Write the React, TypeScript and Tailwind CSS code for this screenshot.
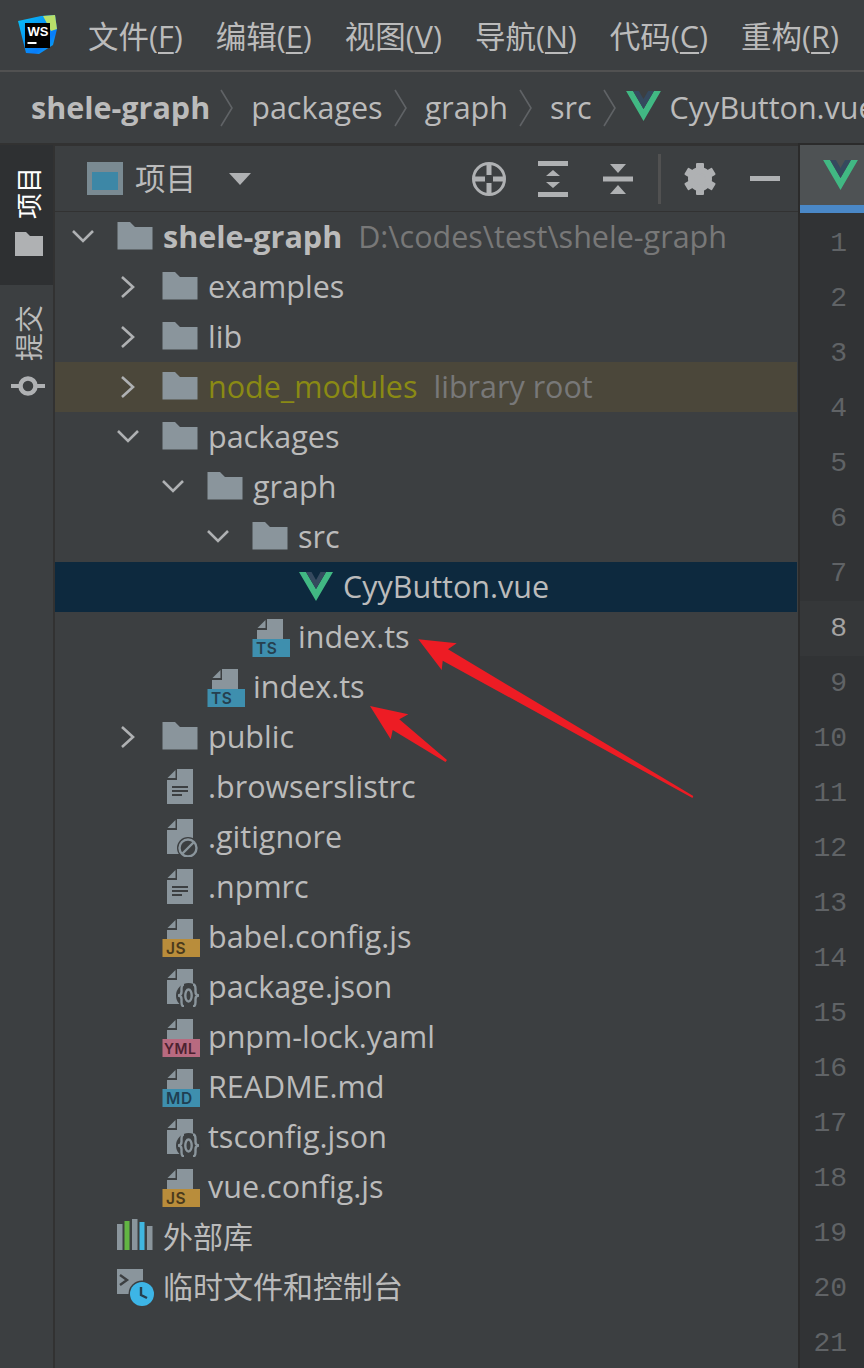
import type { ReactNode } from 'react'

const latin = 'font-["Open_Sans","Noto_Sans_CJK_SC",sans-serif]'

const PAGE = '#8a959c'
const BG = '#3c3f41'

function FilePage({ children }: { children?: ReactNode }) {
  return (
    <>
      <path d="M16 2H32V37H6V13H16Z" fill={PAGE} />
      <path d="M14.5 3V11H6.5Z" fill={PAGE} />
      {children}
    </>
  )
}

function Icon({ children }: { children: ReactNode }) {
  return (
    <svg width="40" height="40" viewBox="0 0 40 40" className="flex-none">
      {children}
    </svg>
  )
}

function Folder() {
  return (
    <Icon>
      <path d="M1.5 5H14L19 10H36.5V32.5H1.5Z" fill={PAGE} />
    </Icon>
  )
}

function TextFile() {
  return (
    <Icon>
      <FilePage>
        <path d="M11 20H27M11 24H27M11 28H21" stroke={BG} strokeWidth="2" />
      </FilePage>
    </Icon>
  )
}

function IgnoreFile() {
  return (
    <Icon>
      <FilePage>
        <circle cx="27" cy="31" r="11" fill={BG} />
        <circle cx="27" cy="31" r="8.5" fill={BG} stroke={PAGE} strokeWidth="2.4" />
        <path d="M21.5 36.5L32.5 25.5" stroke={PAGE} strokeWidth="2.4" />
      </FilePage>
    </Icon>
  )
}

function JsonFile() {
  return (
    <Icon>
      <FilePage>
        <circle cx="27.5" cy="28.5" r="12.5" fill={BG} />
        <path
          d="M23 17.5C20.5 17.5 20.5 19.5 20.5 22V25C20.5 27 19.5 28.5 17 28.5C19.5 28.5 20.5 30 20.5 32V35C20.5 37.5 20.5 39.5 23 39.5M32 17.5C34.5 17.5 34.5 19.5 34.5 22V25C34.5 27 35.5 28.5 38 28.5C35.5 28.5 34.5 30 34.5 32V35C34.5 37.5 34.5 39.5 32 39.5"
          fill="none"
          stroke={PAGE}
          strokeWidth="2.4"
        />
        <ellipse cx="27.5" cy="28.5" rx="3.2" ry="6" fill="none" stroke={PAGE} strokeWidth="2.4" />
      </FilePage>
    </Icon>
  )
}

function BadgeFile({ label, fill, ink }: { label: string; fill: string; ink: string }) {
  return (
    <Icon>
      <path d="M16 2H32V22H6V13H16Z" fill={PAGE} />
      <path d="M14.5 3V11H6.5Z" fill={PAGE} />
      <rect x="1.5" y="22" width="37.5" height="18" fill={fill} />
      <text
        x={label === 'YML' ? 3 : 5}
        y="36.5"
        fill={ink}
        fontFamily="Inter"
        fontWeight="600"
        fontSize={label === 'YML' ? 14 : 15.5}
        letterSpacing="0.6"
      >
        {label}
      </text>
    </Icon>
  )
}

function VueMark() {
  return (
    <svg width="35" height="30" viewBox="0 0 36 31" className="flex-none">
      <path d="M0 0H7.2L18 18.5L28.8 0H36L18 31Z" fill="#41b883" />
      <path d="M7.2 0H13.2L18 8.2L22.8 0H28.8L18 18.5Z" fill="#35495e" />
    </svg>
  )
}

function Chevron({ open }: { open?: boolean }) {
  return (
    <svg width="24" height="24" viewBox="0 0 24 24" className="flex-none">
      {open ? (
        <path d="M2 6L12 16L22 6" fill="none" stroke="#afb1b3" strokeWidth="2.6" />
      ) : (
        <path d="M6 2L17 12L6 22" fill="none" stroke="#afb1b3" strokeWidth="2.6" />
      )}
    </svg>
  )
}

function CrumbSep({ last }: { last?: boolean }) {
  return (
    <svg
      width="13"
      height="38"
      viewBox="0 0 13 38"
      className={last ? 'ml-[11px] mr-[10px] flex-none' : 'ml-[11px] mr-[18px] flex-none'}
    >
      <path d="M1 1L12 19L1 37" fill="none" stroke="#606366" strokeWidth="1.6" />
    </svg>
  )
}

function MenuItem({ zh, letter }: { zh: string; letter: string }) {
  return (
    <span className="whitespace-nowrap">
      {zh}(<span className="underline decoration-2 underline-offset-[4px]">{letter}</span>)
    </span>
  )
}

type RowProps = {
  indent: string
  chevron?: 'open' | 'closed'
  icon: ReactNode
  tone?: string
  children: ReactNode
}

function Row({ indent, chevron, icon, tone = '', children }: RowProps) {
  return (
    <div className={`flex h-[50px] items-center whitespace-nowrap ${indent} ${tone}`}>
      <div className="flex w-[45px] flex-none items-center">
        {chevron && <Chevron open={chevron === 'open'} />}
      </div>
      {icon}
      <div className="ml-[7px]">{children}</div>
    </div>
  )
}

const TS = <BadgeFile label="TS" fill="#3e8fae" ink="#26404f" />
const JS = <BadgeFile label="JS" fill="#b98d3b" ink="#4a3a1c" />

export default function App() {
  const lines = Array.from({ length: 21 }, (_, i) => i + 1)

  return (
    <div className={`relative flex h-[1368px] w-[864px] flex-col overflow-hidden bg-[#3c3f41] text-[30.5px] text-[#bbbbbb] ${latin}`}>
      <header className="flex h-[72px] flex-none items-center border-b-2 border-[#515151] pl-[17px]">
        <svg width="41" height="41" viewBox="0 0 41 41" className="flex-none">
          <defs>
            <linearGradient id="ws-logo" x1="0" y1="0" x2="1" y2="1">
              <stop offset="0" stopColor="#07c3f2" />
              <stop offset="0.7" stopColor="#087cfa" />
              <stop offset="1" stopColor="#07c3f2" />
            </linearGradient>
          </defs>
          <path d="M1 6L24 1L38 0L40 14L36 30L22 39L9 38Z" fill="url(#ws-logo)" />
          <path d="M26 1L38 0L40 14L34 16Z" fill="#b8e06a" />
          <rect x="8" y="8" width="25" height="25" fill="#000" />
          <text x="10.5" y="21" fill="#fff" fontFamily="Liberation Sans" fontWeight="700" fontSize="13">
            WS
          </text>
          <rect x="10.5" y="27" width="9" height="2" fill="#fff" />
        </svg>
        <nav className="ml-[30px] flex gap-[33px] pt-[3px]">
          <MenuItem zh="文件" letter="F" />
          <MenuItem zh="编辑" letter="E" />
          <MenuItem zh="视图" letter="V" />
          <MenuItem zh="导航" letter="N" />
          <MenuItem zh="代码" letter="C" />
          <MenuItem zh="重构" letter="R" />
        </nav>
      </header>

      <div className="flex h-[71px] flex-none items-center overflow-hidden whitespace-nowrap pl-[31px]">
        <span className="mr-[-1px] font-bold">shele-graph</span>
        <CrumbSep />
        <span>packages</span>
        <CrumbSep />
        <span>graph</span>
        <CrumbSep />
        <span>src</span>
        <CrumbSep last />
        <div className="mb-[3px] flex-none">
          <VueMark />
        </div>
        <span className="ml-[9px]">CyyButton.vue</span>
      </div>

      <div className="flex min-h-0 flex-1">
        <aside className="flex w-[55px] flex-none flex-col items-center border-r-2 border-t-2 border-[#323232]">
          <div className="flex h-[140px] w-full flex-col items-center bg-[#2e3032] pl-[4px] pt-[22px]">
            <span className="rotate-180 text-[26px] leading-[30px] text-white [text-orientation:sideways] [writing-mode:vertical-rl]">
              项目
            </span>
            <svg width="28" height="24" viewBox="0 0 28 24" className="mt-[13px]">
              <path d="M0 0H11L15 4H28V24H0Z" fill="#afb1b3" />
            </svg>
          </div>
          <div className="flex w-full flex-col items-center pl-[4px]">
            <span className="mt-[20px] rotate-180 text-[28px] leading-[30px] text-[#bbbbbb] [text-orientation:sideways] [writing-mode:vertical-rl]">
              提交
            </span>
            <svg width="36" height="24" viewBox="0 0 36 24" className="mt-[13px]">
              <path d="M0 12H34" stroke="#afb1b3" strokeWidth="4" />
              <circle cx="17" cy="12" r="7.5" fill={BG} stroke="#afb1b3" strokeWidth="4.5" />
            </svg>
          </div>
        </aside>

        <section className="flex w-[743px] flex-none flex-col border-t-[3px] border-[#323232]">
          <div className="flex h-[65px] flex-none items-center pl-[32px]">
            <svg width="36" height="33" viewBox="0 0 36 33" className="flex-none">
              <rect width="36" height="33" fill="#7a8a92" />
              <rect x="5" y="10" width="26" height="18" fill="#3d87a6" />
            </svg>
            <span className="ml-[12px]">项目</span>
            <svg width="22" height="12" viewBox="0 0 22 12" className="ml-[33px] flex-none">
              <path d="M0 0H22L11 12Z" fill="#afb1b3" />
            </svg>
            <div className="ml-[220px] flex items-center">
              <svg width="36" height="36" viewBox="0 0 36 36" className="flex-none">
                <circle cx="18" cy="18" r="15.5" fill="none" stroke="#afb1b3" strokeWidth="3" />
                <path d="M18 4V14M18 22V32M4 18H14M22 18H32" stroke="#afb1b3" strokeWidth="5" />
              </svg>
              <svg width="30" height="36" viewBox="0 0 30 36" className="ml-[31px] flex-none">
                <path d="M0 2.5H30M0 33.5H30" stroke="#afb1b3" strokeWidth="5" />
                <path d="M8 15L15 9L22 15ZM8 21L15 27L22 21Z" fill="#afb1b3" />
              </svg>
              <svg width="30" height="30" viewBox="0 0 30 30" className="ml-[35px] flex-none">
                <path d="M0 15H30" stroke="#afb1b3" strokeWidth="5" />
                <path d="M7 0H23L15 9ZM7 30H23L15 21Z" fill="#afb1b3" />
              </svg>
              <div className="ml-[25px] h-[50px] w-[3px] flex-none bg-[#515151]" />
              <svg width="32" height="32" viewBox="0 0 32 32" className="ml-[23px] flex-none">
                <g fill="#afb1b3">
                  <rect x="12" y="0" width="8" height="32" rx="1" />
                  <rect x="12" y="0" width="8" height="32" rx="1" transform="rotate(60 16 16)" />
                  <rect x="12" y="0" width="8" height="32" rx="1" transform="rotate(120 16 16)" />
                </g>
                <circle cx="16" cy="16" r="9" fill="none" stroke="#afb1b3" strokeWidth="6" />
              </svg>
              <div className="ml-[34px] h-[5px] w-[30px] flex-none bg-[#afb1b3]" />
            </div>
          </div>

          <div className="flex-1 border-t border-[#323232] pr-[1px]">
            <Row indent="pl-[16px]" chevron="open" icon={<Folder />}>
              <span className="font-bold">shele-graph</span>
              <span className="ml-[16px] text-[#787878]">D:\codes\test\shele-graph</span>
            </Row>
            <Row indent="pl-[61px]" chevron="closed" icon={<Folder />}>examples</Row>
            <Row indent="pl-[61px]" chevron="closed" icon={<Folder />}>lib</Row>
            <Row indent="pl-[61px]" chevron="closed" icon={<Folder />} tone="bg-[#4b473a]">
              <span className="text-[#8a8a14]">node_modules</span>
              <span className="ml-[16px] text-[#787878]">library root</span>
            </Row>
            <Row indent="pl-[61px]" chevron="open" icon={<Folder />}>packages</Row>
            <Row indent="pl-[106px]" chevron="open" icon={<Folder />}>graph</Row>
            <Row indent="pl-[151px]" chevron="open" icon={<Folder />}>src</Row>
            <Row indent="pl-[196px]" icon={<Icon><g transform="translate(3 5)"><path d="M0 0H7L17 17L27 0H34L17 29Z" fill="#41b883" /><path d="M7 0H12.5L17 8L21.5 0H27L17 17Z" fill="#35495e" /></g></Icon>} tone="bg-[#0d293e]">
              CyyButton.vue
            </Row>
            <Row indent="pl-[151px]" icon={TS}>index.ts</Row>
            <Row indent="pl-[106px]" icon={TS}>index.ts</Row>
            <Row indent="pl-[61px]" chevron="closed" icon={<Folder />}>public</Row>
            <Row indent="pl-[61px]" icon={<TextFile />}>.browserslistrc</Row>
            <Row indent="pl-[61px]" icon={<IgnoreFile />}>.gitignore</Row>
            <Row indent="pl-[61px]" icon={<TextFile />}>.npmrc</Row>
            <Row indent="pl-[61px]" icon={JS}>babel.config.js</Row>
            <Row indent="pl-[61px]" icon={<JsonFile />}>package.json</Row>
            <Row indent="pl-[61px]" icon={<BadgeFile label="YML" fill="#b86a80" ink="#4c2230" />}>pnpm-lock.yaml</Row>
            <Row indent="pl-[61px]" icon={<BadgeFile label="MD" fill="#3e8fae" ink="#1f3f52" />}>README.md</Row>
            <Row indent="pl-[61px]" icon={<JsonFile />}>tsconfig.json</Row>
            <Row indent="pl-[61px]" icon={JS}>vue.config.js</Row>
            <Row
              indent="pl-[16px]"
              icon={
                <Icon>
                  <rect x="1" y="7" width="5.5" height="26" fill={PAGE} />
                  <rect x="8.5" y="4" width="5" height="29" fill="#62b543" />
                  <rect x="16" y="2" width="5.5" height="31" fill={PAGE} />
                  <rect x="23.5" y="5" width="5" height="28" fill="#40b6e0" />
                  <rect x="31" y="9" width="5.5" height="24" fill={PAGE} />
                </Icon>
              }
            >
              <span className="text-[30px]">外部库</span>
            </Row>
            <Row
              indent="pl-[16px]"
              icon={
                <Icon>
                  <rect x="1" y="2" width="26" height="25" fill={PAGE} />
                  <path d="M4 8L11 13L4 18" fill="none" stroke={BG} strokeWidth="2.4" />
                  <circle cx="26" cy="27" r="13.5" fill={BG} />
                  <circle cx="26" cy="27" r="12" fill="#3db5e6" />
                  <path d="M25 20V28L31 31" fill="none" stroke="#26404f" strokeWidth="2.4" />
                </Icon>
              }
            >
              <span className="text-[30px]">临时文件和控制台</span>
            </Row>
          </div>
        </section>

        <section className="flex min-w-0 flex-1 flex-col border-l-2 border-t-2 border-[#2b2b2b] bg-[#313335]">
          <div className="flex h-[60px] flex-none items-center bg-[#4e5254] pl-[23px]">
            <VueMark />
          </div>
          <div className="h-[8px] flex-none bg-[#4a88c7]" />
          <div className="flex flex-col pt-[3px] font-['Liberation_Mono',monospace] text-[28px]">
            {lines.map(n => (
              <div
                key={n}
                className={
                  n === 8
                    ? 'flex h-[55px] flex-none items-center justify-end bg-[#353739] pr-[17px] text-[#a4a3a3]'
                    : 'flex h-[55px] flex-none items-center justify-end pr-[17px] text-[#606366]'
                }
              >
                {n}
              </div>
            ))}
          </div>
        </section>
      </div>

      <svg width="864" height="1368" viewBox="0 0 864 1368" className="pointer-events-none absolute inset-0">
        <path d="M418.3 639.3L456.7 643.3L448 649.3L693.3 796L692.5 798L442.7 660.7L441.7 670Z" fill="#ed1c24" />
        <path d="M370 706L408.3 714.3L399.3 719.3L447 760L445.5 762L392.7 730L390.7 739.3Z" fill="#ed1c24" />
      </svg>
    </div>
  )
}
